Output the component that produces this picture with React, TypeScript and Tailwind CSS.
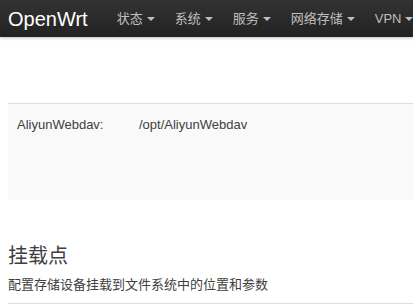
const navItems = ['状态', '系统', '服务', '网络存储', 'VPN']

function Caret() {
  return (
    <span className="ml-[4px] inline-block h-0 w-0 border-x-[4px] border-t-[4px] border-x-transparent border-t-[#bfbfbf] align-middle" />
  )
}

export default function App() {
  return (
    <div className="h-[304px] w-[413px] overflow-hidden bg-white font-['Liberation_Sans','Noto_Sans_CJK_SC',sans-serif] text-[13px] text-[#404040]">
      <div className="flex h-[37px] items-center whitespace-nowrap bg-gradient-to-b from-[#333333] to-[#222222] shadow-[0_1px_3px_rgba(0,0,0,0.25)]">
        <span className="pl-2 pr-[19px] text-[20px] leading-none text-white">OpenWrt</span>
        {navItems.map((item) => (
          <span key={item} className="flex items-center px-[10px] text-[13px] text-[#bfbfbf]">
            {item}
            <Caret />
          </span>
        ))}
      </div>

      <div className="ml-2 mt-[66px] h-[97px] border-t border-[#dddddd] bg-[#f9f9f9]">
        <div className="flex pl-[9px] pt-[12px] leading-[18px]">
          <span className="w-[122px]">AliyunWebdav:</span>
          <span>/opt/AliyunWebdav</span>
        </div>
      </div>

      <div className="ml-2 mt-[41px] border-b border-[#dddddd]">
        <h2 className="text-[20px] leading-[30px] text-[#404040]">挂载点</h2>
        <p className="mt-[4px] pb-[8px] text-[13px] leading-[20px] text-[#404040]">配置存储设备挂载到文件系统中的位置和参数</p>
      </div>
    </div>
  )
}
